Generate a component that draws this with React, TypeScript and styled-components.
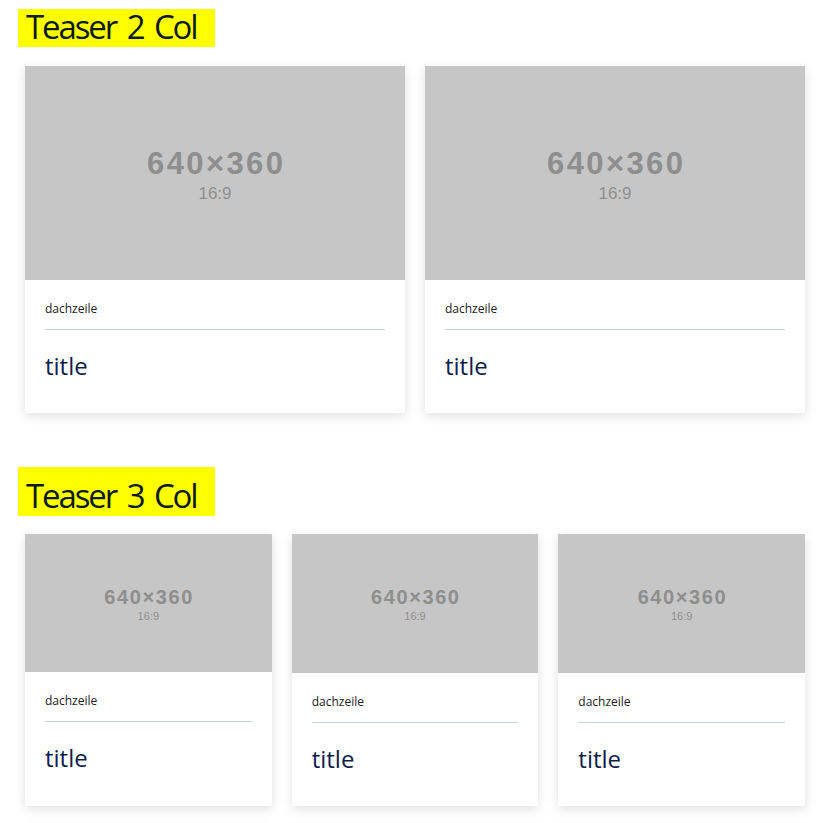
import styled, { createGlobalStyle } from "styled-components";

const GlobalStyle = createGlobalStyle`
  html, body {
    margin: 0;
    padding: 0;
    background: #ffffff;
  }
  body {
    font-family: "Open Sans", "Noto Sans", sans-serif;
  }
`;

type Size = "lg" | "sm";

const Page = styled.div`
  padding: 9px 30px 0 18px;
`;

const Section = styled.section<{ $gapTop: number }>`
  margin-top: ${(p) => p.$gapTop}px;
`;

const Heading = styled.h2<{ $padTop: number }>`
  display: inline-block;
  margin: 0;
  padding: ${(p) => p.$padTop}px 18px 2px 8px;
  background: #ffff00;
  color: #0b1a12;
  font-family: "Open Sans", "Noto Sans", sans-serif;
  font-weight: 500;
  font-size: 33px;
  line-height: 36px;
  letter-spacing: -2.1px;
  word-spacing: 4px;
`;

const Grid = styled.div<{ $cols: number; $top: number }>`
  display: grid;
  grid-template-columns: repeat(${(p) => p.$cols}, 1fr);
  gap: 20px;
  margin: ${(p) => p.$top}px 0 0 7px;
`;

const Card = styled.article`
  background: #ffffff;
  box-shadow: 0 3px 10px rgba(0, 0, 0, 0.13);
`;

const Placeholder = styled.div<{ $size: Size }>`
  aspect-ratio: 16 / 9;
  background: #c6c6c6;
  display: flex;
  flex-direction: column;
  align-items: center;
  justify-content: center;
  padding-top: ${(p) => (p.$size === "lg" ? 4 : 3)}px;
  box-sizing: border-box;
  color: #8e8e8e;
  font-family: "Liberation Sans", Arial, sans-serif;
`;

const Dimensions = styled.div<{ $size: Size }>`
  font-weight: 700;
  font-size: ${(p) => (p.$size === "lg" ? 31 : 20)}px;
  line-height: 1.15;
  letter-spacing: ${(p) => (p.$size === "lg" ? 2.4 : 1.6)}px;
  margin-right: ${(p) => (p.$size === "lg" ? -2.4 : -1.6)}px;
`;

const Ratio = styled.div<{ $size: Size }>`
  font-size: ${(p) => (p.$size === "lg" ? 17 : 11)}px;
  line-height: 1.15;
  margin-top: ${(p) => (p.$size === "lg" ? 2 : 1)}px;
`;

const Body = styled.div`
  padding: 20px 20px 29px;
`;

const Dachzeile = styled.div`
  font-size: 12px;
  line-height: 18px;
  color: #1c1c1c;
`;

const Rule = styled.hr`
  margin: 11px 0 18px;
  border: 0;
  border-top: 1px solid #c4d1dd;
  height: 0;
`;

const Title = styled.h3`
  margin: 0;
  font-size: 24px;
  line-height: 36px;
  font-weight: 400;
  color: #0b1d4d;
`;

const Teaser = ({ size }: { size: Size }) => (
  <Card>
    <Placeholder $size={size}>
      <Dimensions $size={size}>640×360</Dimensions>
      <Ratio $size={size}>16:9</Ratio>
    </Placeholder>
    <Body>
      <Dachzeile>dachzeile</Dachzeile>
      <Rule />
      <Title>title</Title>
    </Body>
  </Card>
);

export default function App() {
  return (
    <>
      <GlobalStyle />
      <Page>
        <Section $gapTop={0}>
          <Heading $padTop={0}>Teaser 2 Col</Heading>
          <Grid $cols={2} $top={19}>
            {[0, 1].map((i) => (
              <Teaser key={i} size="lg" />
            ))}
          </Grid>
        </Section>
        <Section $gapTop={54}>
          <Heading $padTop={11}>Teaser 3 Col</Heading>
          <Grid $cols={3} $top={18}>
            {[0, 1, 2, 3, 4, 5].map((i) => (
              <Teaser key={i} size="sm" />
            ))}
          </Grid>
        </Section>
      </Page>
    </>
  );
}
